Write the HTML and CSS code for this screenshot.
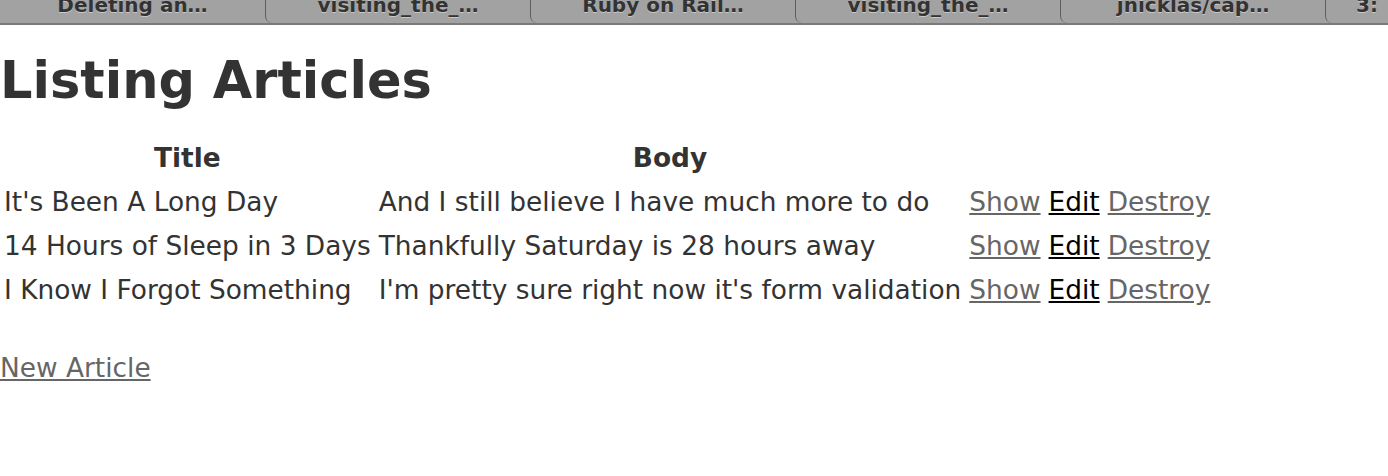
FILE: index.html
```html
<!DOCTYPE html>
<html>
<head>
<meta charset="utf-8">
<title>Listing Articles</title>
<link rel="stylesheet" href="styles.css">
</head>
<body>
<div class="tabbar">
  <div class="tab first"><span class="tab-label">Deleting an…</span></div>
  <div class="tab"><span class="tab-label">visiting_the_…</span></div>
  <div class="tab"><span class="tab-label">Ruby on Rail…</span></div>
  <div class="tab"><span class="tab-label">visiting_the_…</span></div>
  <div class="tab"><span class="tab-label">jnicklas/cap…</span></div>
  <div class="tab last"><span class="tab-label">3:</span></div>
</div>
<div class="page">
  <h1 class="title">Listing Articles</h1>
  <table class="articles">
    <tr>
      <th>Title</th>
      <th>Body</th>
      <th colspan="3"></th>
    </tr>
    <tr>
      <td>It's Been A Long Day</td>
      <td>And I still believe I have much more to do</td>
      <td><a class="visited" href="#">Show</a></td>
      <td><a href="#">Edit</a></td>
      <td><a class="visited" href="#">Destroy</a></td>
    </tr>
    <tr>
      <td>14 Hours of Sleep in 3 Days</td>
      <td>Thankfully Saturday is 28 hours away</td>
      <td><a class="visited" href="#">Show</a></td>
      <td><a href="#">Edit</a></td>
      <td><a class="visited" href="#">Destroy</a></td>
    </tr>
    <tr>
      <td>I Know I Forgot Something</td>
      <td>I'm pretty sure right now it's form validation</td>
      <td><a class="visited" href="#">Show</a></td>
      <td><a href="#">Edit</a></td>
      <td><a class="visited" href="#">Destroy</a></td>
    </tr>
  </table>
  <br>
  <a class="visited" href="#">New Article</a>
</div>
</body>
</html>
```
FILE: styles.css
```css
html, body {
  margin: 0;
  padding: 0;
  background: #fff;
}

body {
  color: #333;
  font-family: "DejaVu Sans", Verdana, sans-serif;
  font-size: 26.4px;
  line-height: 36px;
}

.tabbar {
  display: flex;
  height: 23px;
  background: #a2a2a2;
  border-bottom: 2px solid #7a7a7a;
  overflow: hidden;
}

.tab {
  flex: 0 0 264px;
  position: relative;
  display: flex;
  justify-content: center;
  align-items: flex-end;
  border-left: 1px solid #5f5f5f;
  border-bottom-left-radius: 7px;
  overflow: hidden;
}

.tab.first {
  flex-basis: 265px;
  border-left: none;
}

.tab.last {
  flex: 1 1 auto;
}

.tab-label {
  font-family: "DejaVu Sans", sans-serif;
  font-weight: bold;
  font-size: 20px;
  line-height: 20px;
  color: #333;
  text-shadow: 0 1px 0 #c8c8c8;
  margin-bottom: 8px;
  white-space: nowrap;
}

.tab.last .tab-label {
  margin-left: 20px;
}

.page {
  padding: 0;
}

.title {
  font-size: 51px;
  line-height: 36px;
  margin: 38px 0 35px;
}

.articles {
  border-spacing: 4px;
  margin-left: -2px;
}

.articles th,
.articles td {
  padding: 2px;
  white-space: nowrap;
}

.articles th {
  font-weight: bold;
}

a {
  color: #000;
}

a.visited {
  color: #666;
}
```
